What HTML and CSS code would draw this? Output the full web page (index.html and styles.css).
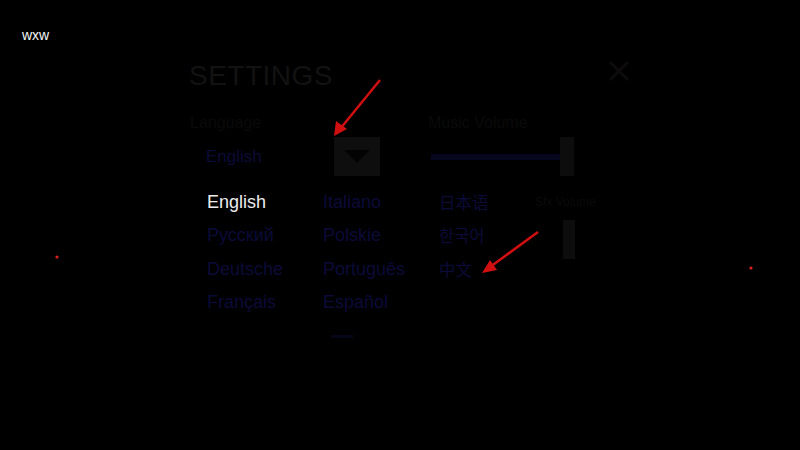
FILE: index.html
```html
<!DOCTYPE html>
<html>
<head>
<meta charset="utf-8">
<link rel="stylesheet" href="styles.css">
</head>
<body>
<div class="page">
  <div class="user">wxw</div>
  <div class="panel">
    <div class="header">
      <div class="title">SETTINGS</div>
      <div class="close">
        <svg width="22" height="22" viewBox="0 0 22 22"><path d="M2 2 L20 20 M20 2 L2 20" stroke="#0d0b0b" stroke-width="3" fill="none"/></svg>
      </div>
    </div>
    <div class="controls">
      <div class="lang-section">
        <div class="label">Language</div>
        <div class="dropdown">
          <div class="current">English</div>
          <div class="dd-btn"><span class="tri"></span></div>
        </div>
      </div>
      <div class="music-section">
        <div class="label">Music Volume</div>
        <div class="slider">
          <div class="track"></div>
          <div class="handle"></div>
        </div>
      </div>
    </div>
    <div class="lower">
      <div class="lang-grid">
        <div class="lang active">English</div>
        <div class="lang">Italiano</div>
        <div class="lang cjk">日本语</div>
        <div class="lang">Русский</div>
        <div class="lang">Polskie</div>
        <div class="lang cjk">한국어</div>
        <div class="lang">Deutsche</div>
        <div class="lang">Português</div>
        <div class="lang cjk">中文</div>
        <div class="lang">Français</div>
        <div class="lang">Español</div>
        <div class="lang"></div>
        <div class="lang"></div>
        <div class="lang more"><span class="more-bar"></span></div>
      </div>
      <div class="sfx">
        <div class="sfx-label">Sfx Volume</div>
        <div class="handle small"></div>
      </div>
    </div>
  </div>
</div>
<svg class="annot" width="800" height="450" viewBox="0 0 800 450">
  <line x1="380" y1="80" x2="340" y2="129" stroke="#d01010" stroke-width="2.5"/>
  <polygon points="334,136 336,121 347,129" fill="#d01010"/>
  <line x1="538" y1="232" x2="490" y2="267" stroke="#d01010" stroke-width="2.5"/>
  <polygon points="482,273 490,260 497,270" fill="#d01010"/>
  <circle cx="57" cy="257" r="1.6" fill="#e02020"/>
  <circle cx="751" cy="268" r="1.6" fill="#e02020"/>
</svg>
</body>
</html>
```
FILE: styles.css
```css
html, body {
  margin: 0;
  padding: 0;
  background: #000;
  width: 800px;
  height: 450px;
  overflow: hidden;
  font-family: "Liberation Sans", Arial, "Noto Sans CJK SC", sans-serif;
}
.page {
  padding: 27px 0 0 22px;
}
.user {
  color: #f4f4f4;
  font-size: 14px;
  line-height: 16px;
}
.panel {
  margin-left: 167px;
  margin-top: 15px;
  width: 450px;
}
.header {
  display: flex;
  justify-content: space-between;
  align-items: center;
  height: 36px;
}
.title {
  font-size: 28px;
  color: #121212;
  letter-spacing: 0.5px;
}
.close {
  margin-right: 9px;
  margin-top: -11px;
  display: flex;
}
.controls {
  display: flex;
  margin-top: 19px;
}
.label {
  font-size: 16px;
  color: #0a0a0a;
  line-height: 20px;
  margin-left: 1px;
}
.lang-section {
  width: 238px;
}
.dropdown {
  display: flex;
  align-items: center;
  margin-top: 4px;
}
.current {
  margin-left: 17px;
  width: 128px;
  font-size: 17px;
  color: #0b0b38;
}
.dd-btn {
  width: 46px;
  height: 39px;
  background: #0e0e0e;
  display: flex;
  align-items: center;
  justify-content: center;
}
.tri {
  width: 0;
  height: 0;
  border-left: 13px solid transparent;
  border-right: 13px solid transparent;
  border-top: 13px solid #030303;
}
.music-section {
  width: 160px;
}
.slider {
  display: flex;
  align-items: center;
  margin-top: 4px;
  height: 39px;
}
.track {
  width: 129px;
  height: 6px;
  background: #06061e;
  margin-left: 4px;
}
.handle {
  width: 14px;
  height: 39px;
  background: #0d0d0d;
}
.lower {
  display: flex;
  margin-top: 10px;
}
.lang-grid {
  margin-left: 18px;
  display: grid;
  grid-template-columns: 116px 116px 96px;
  grid-auto-rows: 33.3px;
}
.lang {
  font-size: 18px;
  color: #0b0b38;
  line-height: 33px;
}
.lang.active {
  color: #ececec;
}
.lang.cjk {
  font-family: "Noto Sans CJK SC", sans-serif;
  font-size: 16.5px;
}
.more {
  display: flex;
  align-items: center;
}
.more-bar {
  width: 22px;
  height: 3px;
  background: #06061a;
  margin-left: 8px;
  margin-top: 2px;
}
.sfx {
  display: flex;
  flex-direction: column;
}
.sfx-label {
  font-size: 12px;
  color: #0a0a0a;
  line-height: 33px;
}
.handle.small {
  width: 12px;
  margin-left: 28px;
  margin-top: 1px;
}
.annot {
  position: absolute;
  left: 0;
  top: 0;
  pointer-events: none;
}
```
